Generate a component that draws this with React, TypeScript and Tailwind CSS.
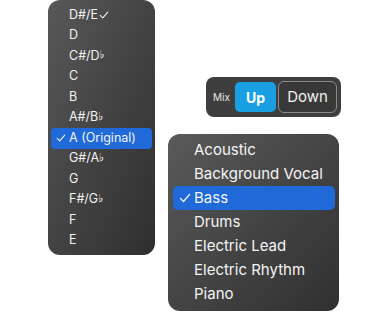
import React from 'react';

const keys = ['D#/E', 'D', 'C#/D♭', 'C', 'B', 'A#/B♭', 'A (Original)', 'G#/A♭', 'G', 'F#/G♭', 'F', 'E'];
const parts = ['Acoustic', 'Background Vocal', 'Bass', 'Drums', 'Electric Lead', 'Electric Rhythm', 'Piano'];

const Check: React.FC<{ className?: string }> = ({ className }) => (
  <svg viewBox="0 0 12 12" className={className} fill="none" stroke="currentColor" strokeWidth={1.3} strokeLinecap="round" strokeLinejoin="round">
    <path d="M1.5 6.5 L4.5 9.5 L10.5 2.5" />
  </svg>
);

const renderKey = (label: string) => {
  // flats drawn a bit smaller, like the reference
  const bits = label.split('♭');
  if (bits.length === 1) return label;
  return (
    <>
      {bits[0]}
      <span className="text-[11px] text-white font-['DejaVu_Sans',sans-serif] relative -top-[1px]">♭</span>
    </>
  );
};

const App: React.FC = () => {
  return (
    <div className="w-[388px] h-[312px] bg-white overflow-hidden flex font-['Inter','Liberation_Sans',sans-serif]">
      {/* Key menu */}
      <div className="ml-[48px] w-[107px] h-[255px] rounded-[12px] bg-gradient-to-br from-[#585858] to-[#2f2f2f] pt-[5px] px-[3px] text-[#f2f2f2] text-[12.5px] shrink-0">
        {keys.map((k, i) => {
          const active = i === 6;
          return (
            <div
              key={k}
              className={`h-[20.5px] flex items-center rounded-[4px] ${active ? 'bg-[#1f6ad8]' : ''}`}
            >
              <div className="w-[18px] flex justify-center">
                {active && <Check className="w-[10px] h-[10px] ml-[2px]" />}
              </div>
              <span className="flex items-center">
                {renderKey(k)}
                {i === 0 && <Check className="w-[10px] h-[10px] ml-[1px]" />}
              </span>
            </div>
          );
        })}
      </div>

      <div className="ml-[13px] flex flex-col">
        {/* Mix toggle */}
        <div className="ml-[38px] mt-[77px] w-[135px] h-[40px] rounded-[8px] bg-[#3e3e3e] flex items-center pl-[7px] pr-[4px]">
          <span className="text-[10px] text-[#e6e6e6] w-[22px]">Mix</span>
          <div className="w-[41px] h-[30px] rounded-[5px] bg-[#18a0e2] flex items-center justify-center text-white text-[14px] font-bold">
            Up
          </div>
          <div className="ml-[2px] w-[59px] h-[32px] rounded-[6px] border border-[#8a8a8a] bg-[#383838] flex items-center justify-center text-[#f0f0f0] text-[15px]">
            Down
          </div>
        </div>

        {/* Part menu */}
        <div className="mt-[17px] w-[171px] h-[177px] rounded-[12px] bg-gradient-to-br from-[#5a5a5a] to-[#303030] pt-[4px] pl-[5px] pr-[4px] text-[#f4f4f4] text-[15px]">
          {parts.map((p, i) => {
            const active = i === 2;
            return (
              <div
                key={p}
                className={`h-[24px] flex items-center rounded-[5px] ${active ? 'bg-[#1f6ad8]' : ''}`}
              >
                <div className="w-[21px] flex justify-center">
                  {active && <Check className="w-[12px] h-[12px] ml-[2px]" />}
                </div>
                <span>{p}</span>
              </div>
            );
          })}
        </div>
      </div>
    </div>
  );
};

export default App;
